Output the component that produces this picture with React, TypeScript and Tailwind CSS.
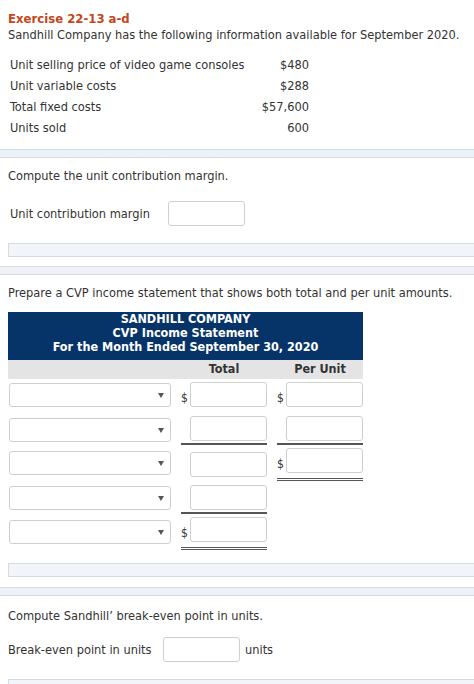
const font = { fontFamily: '"DejaVu Sans Condensed", "DejaVu Sans", sans-serif' };

function Band() {
  return <div className="h-[9px] w-full border-y border-[#d3dbe3] bg-[#eef2f6]" />;
}

function FeedbackBar() {
  return <div className="ml-2 h-[14px] border border-r-0 border-[#d3dbe3] bg-[#f1f4f8]" />;
}

function Box({ w = 'w-[77px]' }: { w?: string }) {
  return <div className={`${w} h-[25px] rounded-[3px] border border-[#cfcfcf] bg-white`} />;
}

function Select({ top }: { top: string }) {
  return (
    <div className={`${top} ml-px flex h-[24px] w-[162px] items-center justify-end rounded-[3px] border border-[#cfcfcf] bg-white pr-[6px]`}>
      <svg width="6" height="5" viewBox="0 0 6 5">
        <path d="M0 0h6L3 5z" fill="#555" />
      </svg>
    </div>
  );
}

function Cell({
  dollar,
  top = '',
  line = '',
}: {
  dollar?: boolean;
  top?: string;
  line?: string;
}) {
  return (
    <div className={`${top} ${line} flex w-[86px] items-end`}>
      <span className="w-[9px] pb-[3px] text-[12px] leading-[12px] text-[#333]">{dollar ? '$' : ''}</span>
      <Box />
    </div>
  );
}

export default function App() {
  return (
    <div className="min-h-[684px] w-[474px] bg-white text-[12.7px] text-[#333]" style={font}>
      <div className="px-2 pt-[11px]">
        <h1 className="text-[13px] font-bold leading-[16px] text-[#c4461c]">Exercise 22-13 a-d</h1>
        <p className="leading-[16px]">Sandhill Company has the following information available for September 2020.</p>
        <div className="mt-[11px] ml-[2px] w-[299px]">
          {[
            ['Unit selling price of video game consoles', '$480'],
            ['Unit variable costs', '$288'],
            ['Total fixed costs', '$57,600'],
            ['Units sold', '600'],
          ].map(([label, value]) => (
            <div key={label} className="flex h-[21px] items-center justify-between">
              <span>{label}</span>
              <span>{value}</span>
            </div>
          ))}
        </div>
      </div>

      <div className="mt-[11px]">
        <Band />
      </div>

      <p className="mt-[10px] px-2 leading-[16px]">Compute the unit contribution margin.</p>
      <div className="mt-[17px] flex items-center">
        <span className="ml-[10px] w-[158px]">Unit contribution margin</span>
        <Box w="w-[77px]" />
      </div>

      <div className="mt-[17px]">
        <FeedbackBar />
      </div>
      <div className="mt-[9px]">
        <Band />
      </div>

      <p className="mt-[10px] px-2 leading-[16px]">Prepare a CVP income statement that shows both total and per unit amounts.</p>

      <div className="mt-[11px] ml-2 w-[355px]">
        <div className="bg-[#073468] pb-[6px] text-center text-[12.5px] font-bold leading-[14px] text-white">
          <div>SANDHILL COMPANY</div>
          <div>CVP Income Statement</div>
          <div>For the Month Ended September 30, 2020</div>
        </div>
        <div className="flex h-[19px] bg-[#e4e4e4] pt-px text-[12.5px] font-bold leading-[16px]">
          <div className="w-[173px]" />
          <div className="w-[86px] text-center">Total</div>
          <div className="w-[10px]" />
          <div className="w-[86px] text-center">Per Unit</div>
        </div>

        <div className="mt-[3px] flex h-[34px] items-start">
          <div className="w-[173px]"><Select top="mt-px" /></div>
          <Cell dollar />
          <div className="w-[10px]" />
          <Cell dollar />
        </div>

        <div className="flex h-[32px] items-start">
          <div className="w-[173px]"><Select top="mt-[2px]" /></div>
          <Cell line="border-b-2 border-[#555] pb-[2px]" />
          <div className="w-[10px]" />
          <Cell line="border-b-2 border-[#555] pb-[2px]" />
        </div>

        <div className="flex h-[37px] items-start">
          <div className="w-[173px]"><Select top="mt-[3px]" /></div>
          <Cell top="mt-[4px]" />
          <div className="w-[10px]" />
          <Cell dollar line="border-b-[3px] border-double border-[#555] pb-[5px]" />
        </div>

        <div className="flex h-[32px] items-start">
          <div className="w-[173px]"><Select top="mt-px" /></div>
          <Cell line="border-b-2 border-[#555] pb-[2px]" />
        </div>

        <div className="flex h-[34px] items-start">
          <div className="w-[173px]"><Select top="mt-[3px]" /></div>
          <Cell dollar line="border-b-[3px] border-double border-[#555] pb-[5px]" />
        </div>
      </div>

      <div className="mt-[12px]">
        <FeedbackBar />
      </div>
      <div className="mt-[10px]">
        <Band />
      </div>

      <p className="mt-[12px] px-2 leading-[16px]">Compute Sandhill’ break-even point in units.</p>
      <div className="mt-[13px] flex items-center">
        <span className="ml-2 w-[155px]">Break-even point in units</span>
        <Box w="w-[77px]" />
        <span className="ml-[5px]">units</span>
      </div>

      <div className="mt-[17px]">
        <FeedbackBar />
      </div>
    </div>
  );
}
